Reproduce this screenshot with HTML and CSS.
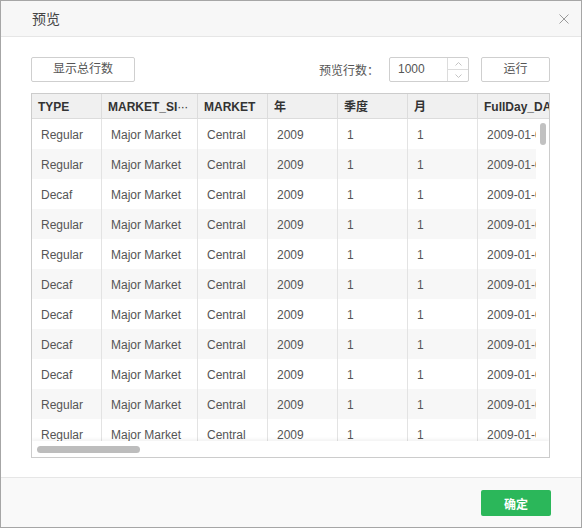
FILE: index.html
```html
<!DOCTYPE html>
<html lang="zh-CN">
<head>
<meta charset="utf-8">
<link rel="stylesheet" href="styles.css">
</head>
<body>
<div class="dialog">
  <div class="header">
    <span class="title">预览</span>
    <svg class="close" width="10" height="10" viewBox="0 0 10 10"><path d="M0.5 0.5 L9.5 9.5 M9.5 0.5 L0.5 9.5" stroke="#9a9a9a" stroke-width="1" fill="none"/></svg>
  </div>
  <div class="content">
    <div class="toolbar">
      <button class="btn btn-total">显示总行数</button>
      <span class="label">预览行数：</span>
      <div class="spinner">
        <span class="spin-value">1000</span>
        <div class="spin-arrows">
          <div class="arrow"><svg width="7" height="4" viewBox="0 0 7 4"><path d="M0.5 3.5 L3.5 0.5 L6.5 3.5" stroke="#c4c4c4" fill="none"/></svg></div>
          <div class="arrow arrow-down"><svg width="7" height="4" viewBox="0 0 7 4"><path d="M0.5 0.5 L3.5 3.5 L6.5 0.5" stroke="#c4c4c4" fill="none"/></svg></div>
        </div>
      </div>
      <button class="btn btn-run">运行</button>
    </div>
    <div class="grid">
      <div class="thead">
        <div class="th c1">TYPE</div>
        <div class="th c2">MARKET_SI<span class="ell">···</span></div>
        <div class="th c3">MARKET</div>
        <div class="th c4">年</div>
        <div class="th c5">季度</div>
        <div class="th c6">月</div>
        <div class="th c7">FullDay_DATE</div>
      </div>
      <div class="tbody-wrap">
        <div class="viewport">
          <div class="tr"><div class="td c1">Regular</div><div class="td c2">Major Market</div><div class="td c3">Central</div><div class="td c4">2009</div><div class="td c5">1</div><div class="td c6">1</div><div class="td c7">2009-01-01</div></div>
          <div class="tr"><div class="td c1">Regular</div><div class="td c2">Major Market</div><div class="td c3">Central</div><div class="td c4">2009</div><div class="td c5">1</div><div class="td c6">1</div><div class="td c7">2009-01-01</div></div>
          <div class="tr"><div class="td c1">Decaf</div><div class="td c2">Major Market</div><div class="td c3">Central</div><div class="td c4">2009</div><div class="td c5">1</div><div class="td c6">1</div><div class="td c7">2009-01-01</div></div>
          <div class="tr"><div class="td c1">Regular</div><div class="td c2">Major Market</div><div class="td c3">Central</div><div class="td c4">2009</div><div class="td c5">1</div><div class="td c6">1</div><div class="td c7">2009-01-01</div></div>
          <div class="tr"><div class="td c1">Regular</div><div class="td c2">Major Market</div><div class="td c3">Central</div><div class="td c4">2009</div><div class="td c5">1</div><div class="td c6">1</div><div class="td c7">2009-01-01</div></div>
          <div class="tr"><div class="td c1">Decaf</div><div class="td c2">Major Market</div><div class="td c3">Central</div><div class="td c4">2009</div><div class="td c5">1</div><div class="td c6">1</div><div class="td c7">2009-01-01</div></div>
          <div class="tr"><div class="td c1">Decaf</div><div class="td c2">Major Market</div><div class="td c3">Central</div><div class="td c4">2009</div><div class="td c5">1</div><div class="td c6">1</div><div class="td c7">2009-01-01</div></div>
          <div class="tr"><div class="td c1">Decaf</div><div class="td c2">Major Market</div><div class="td c3">Central</div><div class="td c4">2009</div><div class="td c5">1</div><div class="td c6">1</div><div class="td c7">2009-01-01</div></div>
          <div class="tr"><div class="td c1">Decaf</div><div class="td c2">Major Market</div><div class="td c3">Central</div><div class="td c4">2009</div><div class="td c5">1</div><div class="td c6">1</div><div class="td c7">2009-01-01</div></div>
          <div class="tr"><div class="td c1">Regular</div><div class="td c2">Major Market</div><div class="td c3">Central</div><div class="td c4">2009</div><div class="td c5">1</div><div class="td c6">1</div><div class="td c7">2009-01-01</div></div>
          <div class="tr"><div class="td c1">Regular</div><div class="td c2">Major Market</div><div class="td c3">Central</div><div class="td c4">2009</div><div class="td c5">1</div><div class="td c6">1</div><div class="td c7">2009-01-01</div></div>
        </div>
        <div class="vscroll"><div class="vthumb"></div></div>
      </div>
      <div class="hscroll"><div class="hthumb"></div></div>
    </div>
  </div>
  <div class="footer">
    <button class="btn-ok">确定</button>
  </div>
</div>
</body>
</html>
```

FILE: styles.css
```css
* { box-sizing: border-box; }
html, body { margin: 0; padding: 0; background: #ffffff; }
body { font-family: "Liberation Sans", "Noto Sans CJK SC", sans-serif; font-size: 12px; color: #555; }

.dialog {
  width: 582px;
  height: 528px;
  border: 1px solid #a6a6a6;
  display: flex;
  flex-direction: column;
  background: #fff;
}

.header {
  height: 36px;
  flex: none;
  background: #f7f7f7;
  border-bottom: 1px solid #e6e6e6;
  display: flex;
  align-items: center;
  padding: 0 12px 0 31px;
}
.title { font-size: 14px; color: #444; flex: 1; line-height: 1; }
.close { display: block; margin-top: 1px; }

.content {
  flex: none;
  height: 440px;
  padding: 20px 31px 19px 30px;
  display: flex;
  flex-direction: column;
}

.toolbar {
  height: 25px;
  display: flex;
  align-items: center;
  margin-bottom: 11px;
}
.btn {
  font-family: "Liberation Sans", "Noto Sans CJK SC", sans-serif;
  font-size: 12px;
  color: #555;
  background: #fff;
  border: 1px solid #cfcfcf;
  border-radius: 2px;
  height: 25px;
  padding: 0;
  line-height: 23px;
}
.btn-total { width: 104px; }
.label { margin-left: auto; margin-right: 10px; color: #555; }
.spinner {
  width: 80px;
  height: 25px;
  border: 1px solid #cfcfcf;
  border-radius: 2px;
  display: flex;
}
.spin-value { flex: 1; padding-left: 8px; line-height: 23px; color: #555; }
.spin-arrows {
  width: 21px;
  border-left: 1px solid #dcdcdc;
  display: flex;
  flex-direction: column;
}
.arrow { flex: 1; display: flex; align-items: center; justify-content: center; }
.arrow svg { display: block; }
.arrow-down { border-top: 1px solid #dcdcdc; }
.btn-run { width: 69px; margin-left: 12px; }

.grid {
  width: 519px;
  height: 365px;
  border: 1px solid #cccccc;
  display: flex;
  flex-direction: column;
  overflow: hidden;
}
.thead {
  height: 25px;
  flex: none;
  display: flex;
  background: #f0f0f0;
  border-bottom: 1px solid #dcdcdc;
  overflow: hidden;
}
.th {
  flex: none;
  height: 100%;
  border-right: 1px solid #dcdcdc;
  padding: 1px 0 0 6px;
  font-weight: bold;
  color: #333;
  line-height: 24px;
  white-space: nowrap;
  overflow: hidden;
}
.ell { font-weight: normal; letter-spacing: -0.5px; }
.c1 { width: 70px; }
.c2 { width: 96px; }
.c3 { width: 70px; }
.c4 { width: 70px; }
.c5 { width: 70px; }
.c6 { width: 70px; }
.c7 { width: 110px; }

.tbody-wrap {
  flex: none;
  height: 322px;
  display: flex;
}
.viewport {
  width: 504px;
  overflow: hidden;
}
.tr {
  height: 30px;
  display: flex;
  width: 556px;
}
.tr:nth-child(even) { background: #f7f7f7; }
.td {
  flex: none;
  height: 100%;
  border-right: 1px solid #e3e3e3;
  padding: 1px 0 0 9px;
  line-height: 30px;
  white-space: nowrap;
  overflow: hidden;
  color: #555;
}
.vscroll { width: 13px; background: #fff; padding: 4px 0 0 4px; }
.vthumb { width: 6px; height: 22px; border-radius: 3px; background: #c1c1c1; }

.hscroll {
  flex: none;
  height: 16px;
  background: #fff;
  padding: 5px 0 0 5px;
  box-shadow: 0 -2px 3px rgba(0,0,0,0.05);
  position: relative;
}
.hthumb { width: 103px; height: 7px; border-radius: 4px; background: #bdbdbd; }

.footer {
  flex: 1;
  background: #f9f9f9;
  border-top: 1px solid #e6e6e6;
  display: flex;
  justify-content: flex-end;
  align-items: flex-start;
  padding: 12px 30px 0 0;
}
.btn-ok {
  width: 70px;
  height: 26px;
  border: none;
  border-radius: 2px;
  background: #2bb75a;
  color: #fff;
  font-family: "Liberation Sans", "Noto Sans CJK SC", sans-serif;
  font-size: 12px;
  font-weight: bold;
  padding: 0;
}
```
